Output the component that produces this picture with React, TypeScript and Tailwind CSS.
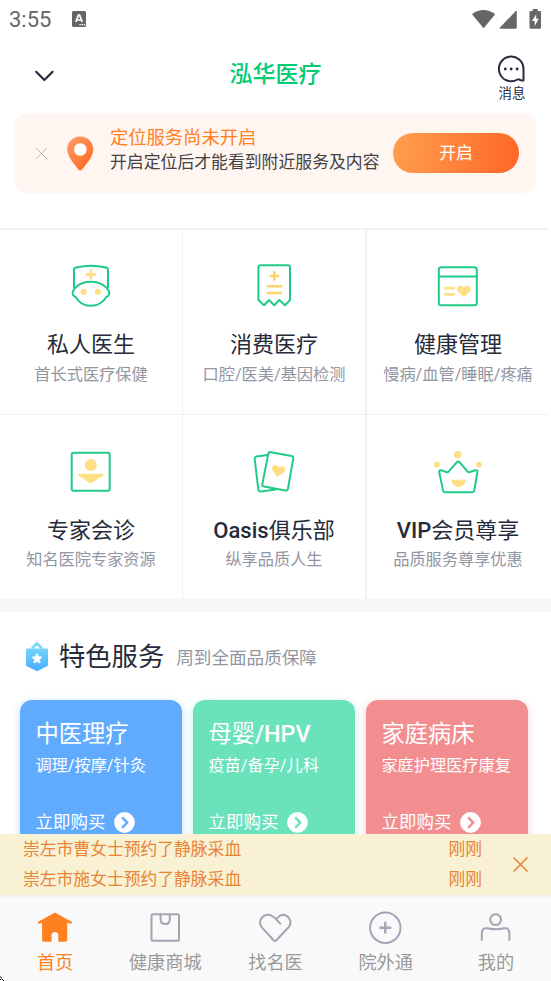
import type { ReactNode } from "react";

const GREEN = "#20cb87";
const YELLOW = "#ffdf86";
const GREY = "#a2a5b3";

function FeatureIcon({ children }: { children: ReactNode }) {
  return (
    <svg width="48" height="48" viewBox="0 0 48 48" fill="none" stroke={GREEN} strokeWidth="2" strokeLinejoin="round" strokeLinecap="round" className="block shrink-0 overflow-visible">
      {children}
    </svg>
  );
}

const heart = "M0 6 L-6 0.2 C-9 -3.4 -3.6 -8 0 -3.6 C3.6 -8 9 -3.4 6 0.2 Z";

const features = [
  {
    title: "私人医生",
    sub: "首长式医疗保健",
    icon: (
      <FeatureIcon>
        <path d="M7 25.5V8Q7 6 9 5.5Q24 2.2 39 5.5Q41 6 41 8V25.5" />
        <path d="M6 29C13 16.5 34.5 16.5 42 29Q43 34 39.5 34.8C32.5 46.8 15 46.8 8.5 34.8Q4.5 34 6 29Z" />
        <path d="M23.8 8.6V16.4M19.9 12.5H27.7" stroke={YELLOW} strokeWidth="2.8" />
        <circle cx="16.6" cy="29.7" r="3" fill={YELLOW} stroke="none" />
        <circle cx="30.8" cy="29.7" r="3" fill={YELLOW} stroke="none" />
      </FeatureIcon>
    ),
  },
  {
    title: "消费医疗",
    sub: "口腔/医美/基因检测",
    icon: (
      <FeatureIcon>
        <path d="M8.4 5.3Q8.4 3.3 10.4 3.3H38Q40 3.3 40 5.3V38L35 43.3L29.3 38L24.3 43.3L19 38L14 43.3L8.4 38Z" />
        <path d="M24.3 10.2V17.8M20.5 14H28.1" stroke="#ffd466" strokeWidth="2.6" />
        <path d="M17.8 24.3H31M17.8 31H31" stroke="#ffd466" strokeWidth="2.6" />
      </FeatureIcon>
    ),
  },
  {
    title: "健康管理",
    sub: "慢病/血管/睡眠/疼痛",
    icon: (
      <FeatureIcon>
        <rect x="4.8" y="5.2" width="38" height="38" rx="2.5" />
        <path d="M4.8 14.4H42.8" />
        <path d="M11.2 26.2H20M11.2 32.3H20" stroke={YELLOW} strokeWidth="2.8" />
        <path d={heart} transform="translate(29.8 29.2)" fill={YELLOW} stroke="none" />
      </FeatureIcon>
    ),
  },
  {
    title: "专家会诊",
    sub: "知名医院专家资源",
    icon: (
      <FeatureIcon>
        <rect x="4.7" y="4.7" width="38" height="38" rx="2" />
        <circle cx="23.8" cy="17" r="6" fill={YELLOW} stroke="none" />
        <path d="M12 26.8H35.5L23.8 34.5Z" fill={YELLOW} stroke={YELLOW} />
      </FeatureIcon>
    ),
  },
  {
    latin: "Oasis",
    title: "俱乐部",
    sub: "纵享品质人生",
    icon: (
      <FeatureIcon>
        <path d="M17.8 7L6.5 8.6Q4.4 9 4.7 11L8.3 41.5Q8.6 43.7 10.7 43.4L25.5 41.6" />
        <path d="M20.7 4.2L41.7 8Q43.7 8.4 43.3 10.4L37.9 41Q37.5 42.9 35.5 42.5L13.9 38.6Q11.9 38.2 12.3 36.2L18.3 5.8Q18.7 3.8 20.7 4.2Z" />
        <path d={heart} transform="translate(28.4 23) rotate(10)" fill={YELLOW} stroke="none" />
      </FeatureIcon>
    ),
  },
  {
    latin: "VIP",
    title: "会员尊享",
    sub: "品质服务尊享优惠",
    icon: (
      <FeatureIcon>
        <path d="M6.9 22.3L13 24.2Q14 24.5 14.6 23.6L23 14Q24.2 12.8 25.3 14L33.6 23.6Q34.3 24.5 35.2 24.2L41.6 22.3Q43.7 22 43.4 24L40.3 42.4Q40 44.2 38.4 44.2H11Q9.3 44.2 9 42.4L5.2 24Q5 22 6.9 22.3Z" />
        <circle cx="23.6" cy="6.6" r="3.7" fill={YELLOW} stroke="none" />
        <circle cx="3" cy="16.8" r="3" fill={YELLOW} stroke="none" />
        <circle cx="45" cy="16.8" r="3" fill={YELLOW} stroke="none" />
        <path d="M18 31.8H31Q32.2 31.8 31.6 33C28.8 41 20.2 41 17.4 33Q16.8 31.8 18 31.8Z" fill={YELLOW} stroke="none" />
      </FeatureIcon>
    ),
  },
];

const services = [
  { title: "中医理疗", sub: "调理/按摩/针灸", box: "bg-[#61abff] shadow-[0_2px_8px_#61abff66]", color: "#61abff" },
  { title: "母婴", latin: "/HPV", sub: "疫苗/备孕/儿科", box: "bg-[#6ae2bc] shadow-[0_2px_8px_#6ae2bc66]", color: "#6ae2bc" },
  { title: "家庭病床", sub: "家庭护理医疗康复", box: "bg-[#f28e8f] shadow-[0_2px_8px_#f28e8f66]", color: "#f28e8f" },
];

const notices = ["崇左市曹女士预约了静脉采血", "崇左市施女士预约了静脉采血"];

function TabIcon({ children }: { children: ReactNode }) {
  return (
    <svg width="36" height="36" viewBox="0 0 36 36" fill="none" stroke={GREY} strokeWidth="2" strokeLinejoin="round" strokeLinecap="round" className="block">
      {children}
    </svg>
  );
}

const tabs = [
  {
    label: "首页",
    color: "text-[#ff801f]",
    icon: (
      <TabIcon>
        <path d="M17.9 2.4L35 12.1L34.6 13.8L30.2 12.8V30Q30.2 31.8 28.4 31.8H21.3V25.5Q21.3 22 17.9 22Q14.6 22 14.6 25.5V31.8H7Q5.1 31.8 5.1 30V12.8L1.2 13.8L.8 12.1Z" fill="#ff801f" stroke="none" />
      </TabIcon>
    ),
  },
  {
    label: "健康商城",
    color: "text-[#999]",
    icon: (
      <TabIcon>
        <rect x="4.5" y="4.2" width="27.5" height="26.6" rx="1.5" />
        <path d="M13.6 4.5V9.2Q13.6 14 18.2 14Q22.8 14 22.8 9.2V4.5" />
      </TabIcon>
    ),
  },
  {
    label: "找名医",
    color: "text-[#999]",
    icon: (
      <TabIcon>
        <path d="M23.2 13.6L20.2 10.4C17 7.1 15.4 4.8 11 4.8C5 4.8 0.8 11.5 4.4 16.8L16.4 30Q18 31.8 19.6 30L31.6 17.2C36.6 11 30 2.2 23 5.6C21.4 6.5 20.3 8 19.6 9" />
      </TabIcon>
    ),
  },
  {
    label: "院外通",
    color: "text-[#999]",
    icon: (
      <TabIcon>
        <circle cx="17.3" cy="17.7" r="15.2" />
        <path d="M17.3 12.8V22.6M12.4 17.7H22.2" strokeWidth="2.4" />
      </TabIcon>
    ),
  },
  {
    label: "我的",
    color: "text-[#999]",
    icon: (
      <TabIcon>
        <circle cx="17.6" cy="9.6" r="5.4" />
        <path d="M3.8 30V23.5Q3.8 17.8 8.6 18.3Q17.6 20 26.6 18.3Q31.4 17.8 31.4 23.5V30" />
      </TabIcon>
    ),
  },
];

export default function App() {
  return (
    <div className="relative flex h-[981px] w-[551px] flex-col overflow-hidden bg-white font-[Roboto,'Noto_Sans_CJK_SC',sans-serif] text-[#252b3a]">
      <main className="h-[834px] shrink-0 overflow-hidden">
        <div className="flex h-[38px] items-center justify-between pr-[9px] pl-[9px] text-[#666]">
          <div className="flex items-center">
            <span className="w-[63px] pt-px text-[22px] leading-[38px]">3:55</span>
            <svg width="14" height="16" viewBox="0 0 14 16" className="block">
              <rect width="14" height="16" rx="1.5" fill="#666" />
              <path d="M3.8 11L6.4 4.2H7.6L10.2 11M4.8 9H9.2" stroke="#fff" strokeWidth="1.7" fill="none" />
              <path d="M7.4 13.7H8.8M9.6 13.7H11M11.7 13.7H13" stroke="#fff" strokeWidth="1.2" />
            </svg>
          </div>
          <svg width="72" height="22" viewBox="0 0 72 22" fill="#666" className="mb-[3px] block">
            <path d="M2 7.2Q13.5 -1.2 25.2 7.2L13.6 21.2Z" />
            <path d="M46.8 4.2V20.3Q46.8 21.7 45.4 21.7H30.8Q29 21.7 30.2 20.3L45.6 4.2Q46.8 3.4 46.8 4.2Z" />
            <path d="M62.8 2H67.6V4H69.8Q71 4 71 5.2V20.5Q71 21.7 69.8 21.7H60.7Q59.5 21.7 59.5 20.5V5.2Q59.5 4 60.7 4H62.8Z" />
            <path d="M66.2 7.2L62 14H64.7V19L68.8 11.8H66.2Z" fill="#fff" />
          </svg>
        </div>

        <header className="grid h-[75px] grid-cols-[1fr_auto_1fr] items-start pr-[25px] pl-[34px]">
          <svg width="21" height="14" viewBox="0 0 21 14" fill="none" className="mt-[31px] block">
            <path d="M2.2 2.8L10.4 11L18.6 2.8" stroke="#252b3a" strokeWidth="2.2" strokeLinecap="round" strokeLinejoin="round" />
          </svg>
          <h1 className="mt-[21px] -ml-[9px] text-[23px] leading-[32px] font-medium text-[#02cb74]">泓华医疗</h1>
          <div className="mt-[17px] flex flex-col items-center justify-self-end">
            <svg width="28" height="28" viewBox="0 0 28 28" fill="none" className="block">
              <path d="M25.5 14A12.3 12.3 0 1 0 19.5 24.5Q20.5 23.8 21.5 24.7Q22.5 25.6 25.5 25.4Z" stroke="#252b3a" strokeWidth="2" strokeLinejoin="round" />
              <circle cx="7.3" cy="14" r="1.4" fill="#252b3a" />
              <circle cx="13.2" cy="14" r="1.4" fill="#252b3a" />
              <circle cx="19.1" cy="14" r="1.4" fill="#252b3a" />
            </svg>
            <span className="mt-px text-[13.4px] leading-[20px]">消息</span>
          </div>
        </header>

        <section className="mx-[15px] flex h-[80px] items-center rounded-[12px] bg-[#fff5f1] pr-[17px] pl-[20px]">
          <svg width="13" height="13" viewBox="0 0 13 13" stroke="#bdb8b6" strokeWidth="1" className="block">
            <path d="M.8 .8L12.2 12.2M12.2 .8L.8 12.2" />
          </svg>
          <svg width="28" height="35" viewBox="0 0 28 35" className="ml-[18px] block">
            <defs>
              <linearGradient id="pin" x1="0" y1="0" x2=".7" y2="1">
                <stop offset="0" stopColor="#ff9f6e" />
                <stop offset="1" stopColor="#ff6a22" />
              </linearGradient>
            </defs>
            <path d="M14.3 .4C6.5 .4 1.2 6.5 1.2 13.2C1.2 20.4 9 29 12.3 33.2Q14.3 35.8 16.3 33.2C19.6 29 27.3 20.4 27.3 13.2C27.3 6.5 22 .4 14.3 .4Z" fill="url(#pin)" />
            <circle cx="14.3" cy="13.5" r="6.3" fill="#fff" />
          </svg>
          <div className="mb-[7px] ml-[16px] flex-1">
            <p className="text-[18.3px] leading-[24px] text-[#ff801f]">定位服务尚未开启</p>
            <p className="text-[16.85px] leading-[24px] whitespace-nowrap text-[#444]">开启定位后才能看到附近服务及内容</p>
          </div>
          <button className="h-[40px] w-[126px] rounded-full bg-linear-100 from-[#ff9f4d] to-[#ff6526] pt-px text-[16.8px] text-white">开启</button>
        </section>

        <section className="mt-[35px] grid w-[549px] grid-cols-[183px_184px_182px] border-t-2 border-[#f2f2f2]">
          {features.map((f, i) => (
            <div
              key={f.title}
              className={`flex flex-col items-center border-[#f0f0f0] ${i < 3 ? "h-[185px] border-b pt-[32px]" : "h-[184px] pt-[33px]"} ${
                i % 3 === 0 ? "border-r" : i % 3 === 1 ? "border-r-2" : ""
              }`}
            >
              {f.icon}
              <h2 className="mt-[19px] text-[22px] leading-[32px]">
                {f.latin && <span className="font-medium">{f.latin}</span>}
                {f.title}
              </h2>
              <p className={`text-[16.2px] leading-[24px] whitespace-nowrap text-[#9296a3] ${i < 3 ? "mt-[2px]" : "mt-[1px]"}`}>{f.sub}</p>
            </div>
          ))}
        </section>

        <div className="h-[13px] bg-[#f6f6f6]" />

        <section className="bg-white pl-[20px]">
          <div className="flex h-[88px] items-center pt-[2px] pl-[5px]">
            <svg width="24" height="30" viewBox="0 0 24 30" className="mr-[10px] block">
              <defs>
                <linearGradient id="badge" x1="0" y1="0" x2="0" y2="1">
                  <stop offset="0" stopColor="#72d5fb" />
                  <stop offset="1" stopColor="#49acff" />
                </linearGradient>
              </defs>
              <path d="M7 6.3L12 1.5L17 6.3" fill="none" stroke="#76d9fb" strokeWidth="2.6" />
              <path d="M2.3 6.5H21.7Q23 6.5 23 7.8V22.3Q23 23.6 22 24.2L13 28.8Q12 29.3 11 28.8L2 24.2Q1 23.6 1 22.3V7.8Q1 6.5 2.3 6.5Z" fill="url(#badge)" />
              <path d="M12 11.6L13.6 14.7L17 15.2L14.5 17.6L15.1 21L12 19.4L8.9 21L9.5 17.6L7 15.2L10.4 14.7Z" fill="#fff" stroke="#fff" strokeWidth=".8" strokeLinejoin="round" />
            </svg>
            <h2 className="text-[26.3px] leading-[36px]">特色服务</h2>
            <p className="mt-[1px] ml-[12px] text-[17.6px] leading-[26px] text-[#9296a3]">周到全面品质保障</p>
          </div>
          <div className="flex gap-[11px]">
            {services.map((s) => (
              <article key={s.title} className={`h-[170px] w-[162px] rounded-[12px] pt-[17px] pl-[15.4px] text-white ${s.box}`}>
                <h3 className="text-[23.3px] leading-[34px]">
                  {s.title}
                  {s.latin && <span className="font-medium">{s.latin}</span>}
                </h3>
                <p className="mt-[3px] text-[16.2px] leading-[24px] whitespace-nowrap">{s.sub}</p>
                <div className="mt-[31px] flex items-center">
                  <span className="text-[17.5px] leading-[26px]">立即购买</span>
                  <svg width="21" height="21" viewBox="0 0 21 21" className="ml-[9px] block">
                    <circle cx="10.5" cy="10.5" r="10.4" fill="#fff" />
                    <path d="M8.2 5.4L13.2 10.6L8.2 15.8" fill="none" stroke={s.color} strokeWidth="2.4" />
                  </svg>
                </div>
              </article>
            ))}
          </div>
        </section>
      </main>

      <aside className="flex h-[61px] shrink-0 items-center bg-[#f8f1d4] pr-[23px] pl-[23px] text-[16.8px] leading-[30px] text-[#e88434]">
        <ul className="mb-[2px] flex-1">
          {notices.map((n) => (
            <li key={n} className="flex justify-between pr-[31px]">
              <span>{n}</span>
              <span>刚刚</span>
            </li>
          ))}
        </ul>
        <svg width="15" height="15" viewBox="0 0 15 15" stroke="#e88434" strokeWidth="1.5" className="block">
          <path d="M.5 .5L14.5 14.5M14.5 .5L.5 14.5" />
        </svg>
      </aside>

      <nav className="grid flex-1 grid-cols-5 border-t-3 border-[#f4f4f4] bg-[#f9f9f9] pt-[12px]">
        {tabs.map((t) => (
          <div key={t.label} className={`flex flex-col items-center ${t.color}`}>
            {t.icon}
            <span className="mt-[3px] text-[18.2px] leading-[28px]">{t.label}</span>
          </div>
        ))}
      </nav>

      <svg width="5" height="5" viewBox="0 0 5 5" className="absolute bottom-0 left-0 block">
        <path d="M0 1h1M1 2h1M0 3.5h1M2 3.5h1M3 4.5h1" stroke="#000" strokeWidth="1" />
      </svg>
    </div>
  );
}
